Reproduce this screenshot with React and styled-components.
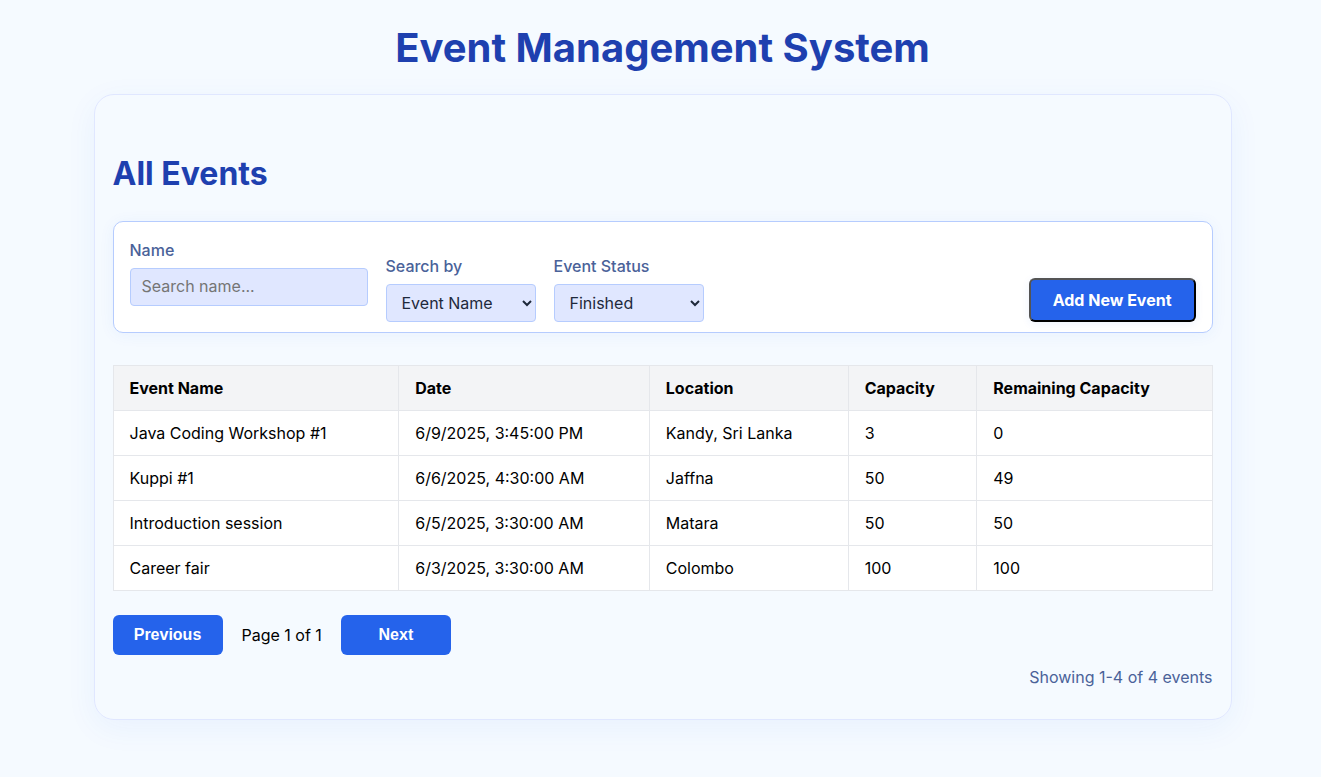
import React from "react";
import styled, { createGlobalStyle } from "styled-components";

const GlobalStyle = createGlobalStyle`
  *, *::before, *::after { box-sizing: border-box; }
  body {
    margin: 0;
    background: #f5faff;
    color: #000;
    font-family: Inter, "Liberation Sans", sans-serif;
    font-size: 16px;
    line-height: 24px;
  }
`;

const Page = styled.div`
  padding: 20px 20px 56px 24px;
`;

const Title = styled.h1`
  margin: 0 0 18px;
  color: #1e40af;
  font-size: 40px;
  font-weight: 700;
  line-height: 56px;
  text-align: center;
`;

const Panel = styled.main`
  max-width: 1138px;
  margin: 0 auto;
  padding: 55px 18px 30px;
  border: 1px solid #e0e7ff;
  border-radius: 20px;
  box-shadow: 0 8px 32px rgba(37, 99, 235, 0.06);
`;

const Heading = styled.h2`
  margin: 0 0 23px;
  color: #1e40af;
  font-size: 32px;
  font-weight: 700;
  line-height: 48px;
`;

const Toolbar = styled.form`
  display: flex;
  align-items: flex-end;
  gap: 18px;
  margin-bottom: 32px;
  padding: 16px 16px 10px;
  background: #fff;
  border: 1px solid #b6ccfe;
  border-radius: 10px;
  box-shadow: 0 2px 16px rgba(37, 99, 235, 0.06);
`;

const Field = styled.div`
  display: flex;
  flex-direction: column;
  gap: 6px;
  width: ${(p) => (p.$wide ? "238px" : "150px")};
  padding-bottom: ${(p) => (p.$wide ? "16px" : "0")};
`;

const Label = styled.label`
  color: #4a6299;
  font-weight: 500;
`;

const Input = styled.input`
  width: 100%;
  height: 38px;
  padding: 0 11px 2px;
  background: #e0e7ff;
  border: 1px solid #b6ccfe;
  border-radius: 4px;
  color: #1e293b;
  font: inherit;

  &::placeholder { color: #757575; }
`;

const Select = styled.select`
  width: 100%;
  height: 38px;
  padding: 0 2px 0 11px;
  background: #e0e7ff;
  border: 1px solid #b6ccfe;
  border-radius: 4px;
  color: #1e293b;
  font: inherit;
`;

const Button = styled.button`
  min-width: 110px;
  height: 40px;
  padding: 0 20px;
  background: #2563eb;
  border: 0;
  border-radius: 6px;
  color: #fff;
  font-family: "Liberation Sans", sans-serif;
  font-size: 16px;
  font-weight: 700;
`;

const AddButton = styled(Button)`
  height: 44px;
  margin-left: auto;
  padding: 0 22px;
  border: 2px outset #000;
  box-shadow: 0 2px 8px rgba(37, 99, 235, 0.08);
  font-family: inherit;
`;

const Table = styled.table`
  width: 100%;
  margin-bottom: 24px;
  background: #fff;
  border-collapse: collapse;
  table-layout: fixed;
`;

const Column = styled.col`
  width: ${(p) => p.$width};
`;

const HeadCell = styled.th`
  padding: 10px 16px;
  background: #f3f4f6;
  border: 1px solid #e5e7eb;
  font-weight: 700;
  text-align: left;
`;

const Cell = styled.td`
  padding: 10px 16px;
  border: 1px solid #e5e7eb;
`;

const Pagination = styled.nav`
  display: flex;
  align-items: center;
  gap: 19px;
`;

const Summary = styled.p`
  margin: 10px 0 0;
  color: #4a6299;
  text-align: right;
`;

const columns = [
  ["Event Name", "26%"],
  ["Date", "22.8%"],
  ["Location", "18.1%"],
  ["Capacity", "11.7%"],
  ["Remaining Capacity", "21.4%"],
];

const events = [
  ["Java Coding Workshop #1", "6/9/2025, 3:45:00 PM", "Kandy, Sri Lanka", 3, 0],
  ["Kuppi #1", "6/6/2025, 4:30:00 AM", "Jaffna", 50, 49],
  ["Introduction session", "6/5/2025, 3:30:00 AM", "Matara", 50, 50],
  ["Career fair", "6/3/2025, 3:30:00 AM", "Colombo", 100, 100],
];

export default function App() {
  return (
    <Page>
      <GlobalStyle />
      <Title>Event Management System</Title>
      <Panel>
        <Heading>All Events</Heading>
        <Toolbar>
          <Field $wide>
            <Label htmlFor="name">Name</Label>
            <Input id="name" type="text" placeholder="Search name..." />
          </Field>
          <Field>
            <Label htmlFor="search-by">Search by</Label>
            <Select id="search-by" defaultValue="Event Name">
              <option>Event Name</option>
              <option>Location</option>
            </Select>
          </Field>
          <Field>
            <Label htmlFor="status">Event Status</Label>
            <Select id="status" defaultValue="Finished">
              <option>Upcoming</option>
              <option>Finished</option>
            </Select>
          </Field>
          <AddButton type="button">Add New Event</AddButton>
        </Toolbar>
        <Table>
          <colgroup>
            {columns.map(([name, width]) => (
              <Column key={name} $width={width} />
            ))}
          </colgroup>
          <thead>
            <tr>
              {columns.map(([name]) => (
                <HeadCell key={name} scope="col">{name}</HeadCell>
              ))}
            </tr>
          </thead>
          <tbody>
            {events.map((event) => (
              <tr key={event[0]}>
                {event.map((value, i) => (
                  <Cell key={columns[i][0]}>{value}</Cell>
                ))}
              </tr>
            ))}
          </tbody>
        </Table>
        <Pagination aria-label="Pagination">
          <Button type="button">Previous</Button>
          <span>Page 1 of 1</span>
          <Button type="button">Next</Button>
        </Pagination>
        <Summary>Showing 1-4 of 4 events</Summary>
      </Panel>
    </Page>
  );
}
